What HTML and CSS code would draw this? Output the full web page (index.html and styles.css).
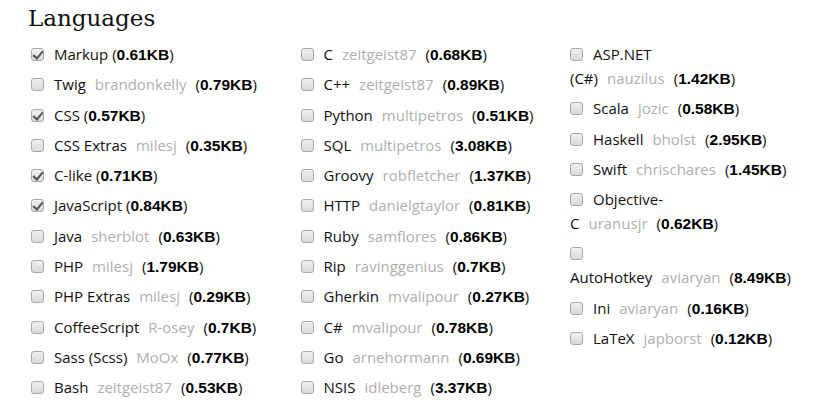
FILE: index.html
```html
<!DOCTYPE html>
<html>
<head>
<meta charset="utf-8">
<link rel="stylesheet" href="styles.css">
</head>
<body>
<section class="languages">
  <h2 class="title">Languages</h2>
  <div class="cols">
    <div class="col">
      <label class="opt"><input type="checkbox" checked>Markup <span class="size">(<strong>0.61KB</strong>)</span></label>
      <label class="opt"><input type="checkbox">Twig<a class="owner">brandonkelly</a><span class="size">(<strong>0.79KB</strong>)</span></label>
      <label class="opt"><input type="checkbox" checked>CSS <span class="size">(<strong>0.57KB</strong>)</span></label>
      <label class="opt"><input type="checkbox">CSS Extras<a class="owner">milesj</a><span class="size">(<strong>0.35KB</strong>)</span></label>
      <label class="opt"><input type="checkbox" checked>C-like <span class="size">(<strong>0.71KB</strong>)</span></label>
      <label class="opt"><input type="checkbox" checked>JavaScript <span class="size">(<strong>0.84KB</strong>)</span></label>
      <label class="opt"><input type="checkbox">Java<a class="owner">sherblot</a><span class="size">(<strong>0.63KB</strong>)</span></label>
      <label class="opt"><input type="checkbox">PHP<a class="owner">milesj</a><span class="size">(<strong>1.79KB</strong>)</span></label>
      <label class="opt"><input type="checkbox">PHP Extras<a class="owner">milesj</a><span class="size">(<strong>0.29KB</strong>)</span></label>
      <label class="opt"><input type="checkbox">CoffeeScript<a class="owner">R-osey</a><span class="size">(<strong>0.7KB</strong>)</span></label>
      <label class="opt"><input type="checkbox">Sass (Scss)<a class="owner">MoOx</a><span class="size">(<strong>0.77KB</strong>)</span></label>
      <label class="opt"><input type="checkbox">Bash<a class="owner">zeitgeist87</a><span class="size">(<strong>0.53KB</strong>)</span></label>
    </div>
    <div class="col">
      <label class="opt"><input type="checkbox">C<a class="owner">zeitgeist87</a><span class="size">(<strong>0.68KB</strong>)</span></label>
      <label class="opt"><input type="checkbox">C++<a class="owner">zeitgeist87</a><span class="size">(<strong>0.89KB</strong>)</span></label>
      <label class="opt"><input type="checkbox">Python<a class="owner">multipetros</a><span class="size">(<strong>0.51KB</strong>)</span></label>
      <label class="opt"><input type="checkbox">SQL<a class="owner">multipetros</a><span class="size">(<strong>3.08KB</strong>)</span></label>
      <label class="opt"><input type="checkbox">Groovy<a class="owner">robfletcher</a><span class="size">(<strong>1.37KB</strong>)</span></label>
      <label class="opt"><input type="checkbox">HTTP<a class="owner">danielgtaylor</a><span class="size">(<strong>0.81KB</strong>)</span></label>
      <label class="opt"><input type="checkbox">Ruby<a class="owner">samflores</a><span class="size">(<strong>0.86KB</strong>)</span></label>
      <label class="opt"><input type="checkbox">Rip<a class="owner">ravinggenius</a><span class="size">(<strong>0.7KB</strong>)</span></label>
      <label class="opt"><input type="checkbox">Gherkin<a class="owner">mvalipour</a><span class="size">(<strong>0.27KB</strong>)</span></label>
      <label class="opt"><input type="checkbox">C#<a class="owner">mvalipour</a><span class="size">(<strong>0.78KB</strong>)</span></label>
      <label class="opt"><input type="checkbox">Go<a class="owner">arnehormann</a><span class="size">(<strong>0.69KB</strong>)</span></label>
      <label class="opt"><input type="checkbox">NSIS<a class="owner">idleberg</a><span class="size">(<strong>3.37KB</strong>)</span></label>
    </div>
    <div class="col">
      <label class="opt"><input type="checkbox">ASP.NET (C#)<a class="owner">nauzilus</a><span class="size">(<strong>1.42KB</strong>)</span></label>
      <label class="opt"><input type="checkbox">Scala<a class="owner">jozic</a><span class="size">(<strong>0.58KB</strong>)</span></label>
      <label class="opt"><input type="checkbox">Haskell<a class="owner">bholst</a><span class="size">(<strong>2.95KB</strong>)</span></label>
      <label class="opt"><input type="checkbox">Swift<a class="owner">chrischares</a><span class="size">(<strong>1.45KB</strong>)</span></label>
      <label class="opt"><input type="checkbox">Objective-C<a class="owner">uranusjr</a><span class="size">(<strong>0.62KB</strong>)</span></label>
      <label class="opt"><input type="checkbox">AutoHotkey<a class="owner">aviaryan</a><span class="size">(<strong>8.49KB</strong>)</span></label>
      <label class="opt"><input type="checkbox">Ini<a class="owner">aviaryan</a><span class="size">(<strong>0.16KB</strong>)</span></label>
      <label class="opt"><input type="checkbox">LaTeX<a class="owner">japborst</a><span class="size">(<strong>0.12KB</strong>)</span></label>
    </div>
  </div>
</section>
</body>
</html>
```

FILE: styles.css
```css
html, body {
  margin: 0;
  padding: 0;
  background: #fff;
}
body {
  font-family: "Open Sans", "Liberation Sans", sans-serif;
  font-size: 15px;
  color: #111;
}
.languages {
  padding: 0 0 0 28px;
}
.title {
  font-family: "DejaVu Serif", serif;
  font-weight: normal;
  font-size: 23px;
  line-height: 30px;
  margin: 3px 0 9px 0;
  color: #111;
}
.cols {
  display: flex;
  gap: 33.5px;
  padding-left: 3px;
}
.col {
  width: 236px;
  flex: none;
}
.opt {
  display: block;
  line-height: 24px;
  margin-bottom: 6.3px;
}
.opt input {
  -webkit-appearance: none;
  appearance: none;
  width: 13px;
  height: 13px;
  margin: 0 10px 0 0;
  border: 1px solid #a8a8a8;
  border-radius: 3px;
  background: linear-gradient(#f0f0f0, #dadada);
  vertical-align: -1px;
  position: relative;
  box-sizing: border-box;
}
.opt input:checked::after {
  content: "";
  position: absolute;
  left: 3px;
  top: 0px;
  width: 4px;
  height: 8px;
  border: solid #555;
  border-width: 0 2px 2px 0;
  transform: rotate(40deg);
}
.owner {
  color: #b0b0b0;
  margin: 0 9px 0 9px;
}
.size strong {
  font-family: "Liberation Sans", "Open Sans", sans-serif;
  font-size: 15.5px;
  line-height: 1;
  font-weight: bold;
  color: #000;
}
```
